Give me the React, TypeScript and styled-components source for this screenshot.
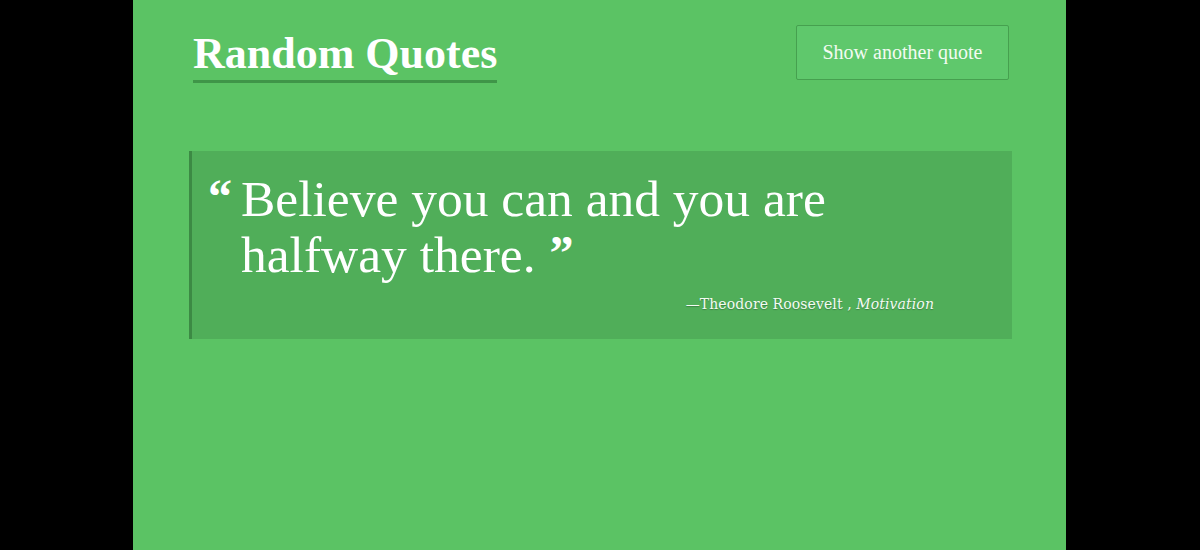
import React from "react";
import styled, { createGlobalStyle } from "styled-components";

const Global = createGlobalStyle`
  html, body { margin: 0; padding: 0; background: #000; height: 100%; }
  #root { height: 100%; }
`;

const Page = styled.div`
  width: 933px;
  height: 550px;
  margin: 0 0 0 133px;
  background: #5bc364;
  box-sizing: border-box;
  padding: 25px 54px 0 56px;
  font-family: "Liberation Serif", "DejaVu Serif", serif;
  color: #fff;
`;

const Header = styled.header`
  display: flex;
  justify-content: space-between;
  align-items: flex-start;
  padding: 0 3px 0 4px;
`;

const Title = styled.h1`
  margin: 7px 0 0;
  font-size: 44px;
  font-weight: 700;
  line-height: 44px;
  padding-bottom: 4px;
  border-bottom: 3px solid #3f9548;
`;

const Button = styled.button`
  width: 213px;
  height: 55px;
  background: #5fc86c;
  border: 1px solid #46a04f;
  border-radius: 2px;
  color: #f2fbf2;
  font-family: "Liberation Serif", serif;
  font-size: 20px;
  cursor: pointer;
`;

const QuoteBox = styled.blockquote`
  margin: 68px 0 0;
  height: 188px;
  box-sizing: border-box;
  background: #50ae59;
  border-left: 3px solid #3c8a44;
  padding: 20px 60px 0 16px;
  display: flex;
  flex-direction: column;
`;

const QuoteText = styled.p`
  margin: 0;
  display: flex;
  align-items: flex-start;
  font-size: 51.5px;
  line-height: 56px;
`;

const OpenMark = styled.span`
  font-weight: 700;
  font-size: 48px;
  line-height: 56px;
  width: 33px;
  flex: none;
  margin-top: -2px;
`;

const CloseMark = styled.span`
  display: inline-block;
  font-weight: 700;
  font-size: 48px;
  line-height: 52px;
  vertical-align: top;
  margin-left: 14px;
`;

const Author = styled.footer`
  margin-top: 13px;
  padding-right: 18px;
  text-align: right;
  font-family: "DejaVu Serif", serif;
  font-size: 14px;
  letter-spacing: 0.1px;
  color: #f3fbf3;
  text-shadow: 0 1px 1px rgba(0, 0, 0, 0.25);
`;

const Category = styled.em`
  font-style: italic;
`;

export default function App() {
  return (
    <>
      <Global />
      <Page>
        <Header>
          <Title>Random Quotes</Title>
          <Button>Show another quote</Button>
        </Header>
        <QuoteBox>
          <QuoteText>
            <OpenMark>“</OpenMark>
            <span>
              Believe you can and you are halfway there.
              <CloseMark>”</CloseMark>
            </span>
          </QuoteText>
          <Author>
            —Theodore Roosevelt , <Category>Motivation</Category>
          </Author>
        </QuoteBox>
      </Page>
    </>
  );
}
